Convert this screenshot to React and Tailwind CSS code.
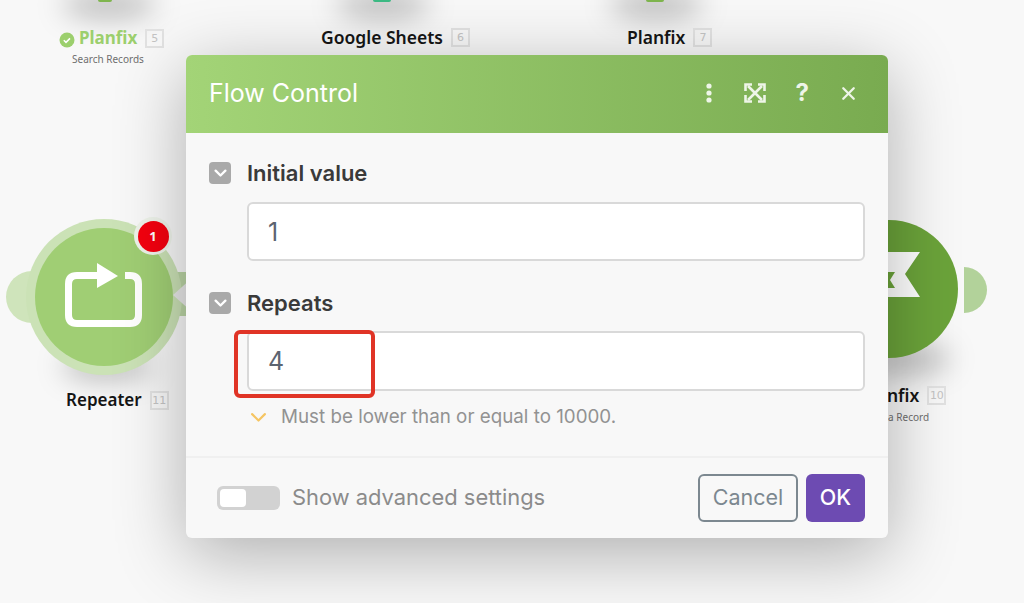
import { X } from "lucide-react";

const sans = "font-['Noto_Sans','Open_Sans',sans-serif]";

function IdBadge({ n }) {
  return (
    <span className="ml-2 flex h-[19px] w-[19px] items-center justify-center border-2 border-[#e2e2e2] font-['DejaVu_Sans',sans-serif] text-[11px] leading-none text-[#c4c4c4]">
      {n}
    </span>
  );
}

function Blob({ className }) {
  // soft shadow under a node
  return <div className={`absolute rounded-[50%] bg-[#000]/25 blur-[14px] ${className}`} />;
}

function Chevron({ color = "white", width = 2, className = "" }) {
  return (
    <svg viewBox="0 0 16 10" className={className} fill="none" stroke={color} strokeWidth={width} strokeLinecap="round" strokeLinejoin="round">
      <path d="M2 2l6 6 6-6" />
    </svg>
  );
}

function Field({ label, value, inputClass }) {
  return (
    <>
      <div className="flex items-center gap-4">
        <span className="flex h-[22px] w-[22px] items-center justify-center rounded bg-[#a9a9a9]">
          <Chevron width={2.8} className="w-[13px]" />
        </span>
        <span className="text-[22px] font-semibold leading-[26px] text-[#3a3a3a]">{label}</span>
      </div>
      <div className={`ml-[38px] flex items-center rounded-md border-2 border-[#d9d9d9] bg-white px-[19px] pt-[2px] text-[25px] text-[#5c6470] ${inputClass}`}>
        {value}
      </div>
    </>
  );
}

function ExpandIcon() {
  return (
    <svg viewBox="0 0 22 20" className="h-[20px] w-[22px]" fill="none" stroke="#eef5e8" strokeWidth="2.6">
      <path d="M4 3l14 14M18 3L4 17" />
      <path d="M1.5 8V1.5H8M14 1.5h6.5V8M20.5 12v6.5H14M8 18.5H1.5V12" />
    </svg>
  );
}

export default function App() {
  return (
    <div className={`relative h-[603px] w-[1024px] overflow-hidden bg-[#f8f8f8] ${sans}`}>
      {/* top row nodes, cut off by the viewport */}
      <Blob className="left-[62px] top-[-8px] h-[26px] w-[94px]" />
      <Blob className="left-[336px] top-[-8px] h-[26px] w-[94px]" />
      <Blob className="left-[609px] top-[-8px] h-[26px] w-[94px]" />
      <div className="absolute left-[98px] top-0 h-[2px] w-[14px] rounded-b-full bg-[#7fb54e]" />
      <div className="absolute left-[373px] top-0 h-[2px] w-[18px] rounded-b-full bg-[#3dba84]" />
      <div className="absolute left-[646px] top-0 h-[2px] w-[18px] rounded-b-full bg-[#7fb54e]" />

      <div className="absolute left-[59px] top-[26px] flex items-center">
        <svg viewBox="0 0 16 16" className="mr-[4px] h-[16px] w-[16px] translate-y-[2px]">
          <circle cx="8" cy="8" r="7.5" fill="#9ccf6d" />
          <path d="M4.8 8.2l2.2 2.2 4-4" fill="none" stroke="white" strokeWidth="1.5" />
        </svg>
        <span className="text-[17px] font-bold leading-[24px] text-[#9ccf6d]">Planfix</span>
        <IdBadge n="5" />
      </div>
      <div className="absolute left-[72px] top-[52px] text-[10px] leading-[14px] text-[#6f6f6f]">Search Records</div>

      <div className="absolute left-[321px] top-[25px] flex items-center">
        <span className="text-[17.5px] font-semibold leading-[24px] text-[#151515]">Google Sheets</span>
        <IdBadge n="6" />
      </div>
      <div className="absolute left-[627px] top-[25px] flex items-center">
        <span className="text-[17.5px] font-semibold leading-[24px] text-[#151515]">Planfix</span>
        <IdBadge n="7" />
      </div>

      {/* Repeater node */}
      <Blob className="left-[62px] top-[352px] h-[28px] w-[90px]" />
      <svg viewBox="0 0 200 180" className="absolute left-0 top-[208px] h-[180px] w-[200px]">
        <circle cx="32" cy="89" r="26" fill="#cfe4bb" />
        <path d="M165 64 L200 64 V108 L165 108 Z" fill="#bcd6a6" />
        <circle cx="104" cy="89" r="78" fill="#cbe2b6" />
        <circle cx="104" cy="89" r="69" fill="#a0ce74" />
        <path d="M173 87 L192 70 V104 Z" fill="#e9e9e9" />
        <path d="M97 67.5 H77 Q68.5 67.5 68.5 76 V107 Q68.5 115.5 77 115.5 H130 Q138.5 115.5 138.5 107 V76 Q138.5 67.5 130 67.5 H125" fill="none" stroke="white" strokeWidth="7" />
        <path d="M97 55 L118 68 L97 80 Z" fill="white" />
      </svg>
      <div className="absolute left-[134px] top-[217px] flex h-[38px] w-[38px] items-center justify-center rounded-full bg-[#eef3ea]">
        <span className="flex h-[31px] w-[31px] items-center justify-center rounded-full bg-[#f5000f] text-[13px] font-bold leading-none text-white">1</span>
      </div>
      <div className="absolute left-[66px] top-[388px] flex items-center">
        <span className="text-[17px] font-semibold leading-[24px] text-[#151515]">Repeater</span>
        <IdBadge n="11" />
      </div>

      {/* Planfix node behind the modal, right side */}
      <Blob className="left-[860px] top-[345px] h-[28px] w-[90px]" />
      <svg viewBox="0 0 170 150" className="absolute left-[830px] top-[215px] h-[150px] w-[170px]">
        <circle cx="59" cy="74" r="69" fill="#6ba33a" />
        <path d="M134 52 A23 23 0 0 1 134 98 Z" fill="#b2d29a" />
        <path d="M50 37 H90 L75 59 L90 82 H50 Z" fill="white" />
        <path d="M50 57 H65 L60 65 L65 73 H50 Z" fill="#6ba33a" />
      </svg>
      <div className="absolute left-[861px] top-[383px] flex items-center">
        <span className="text-[17.5px] font-semibold leading-[24px] text-[#151515]">Planfix</span>
        <IdBadge n="10" />
      </div>
      <div className="absolute left-[851px] top-[410px] text-[10px] leading-[14px] text-[#6f6f6f]">Update a Record</div>

      {/* modal */}
      <div className="absolute left-[186px] top-[55px] flex h-[483px] w-[702px] flex-col overflow-hidden rounded-md bg-[#f8f8f8] font-['Inter',sans-serif] shadow-[0_16px_70px_rgba(0,0,0,0.3)]">
        <div className="flex h-[78px] shrink-0 items-center bg-gradient-to-r from-[#a3d477] to-[#79ab50] pb-[2px] pl-[23px] pr-[29px]">
          <h1 className="text-[25px] leading-none text-white">Flow Control</h1>
          <div className="ml-auto flex items-center">
            <svg viewBox="0 0 8 20" className="h-[20px] w-[8px]" fill="#eef5e8">
              <circle cx="4" cy="3" r="2.6" />
              <circle cx="4" cy="10" r="2.6" />
              <circle cx="4" cy="17" r="2.6" />
            </svg>
            <span className="ml-[31px]"><ExpandIcon /></span>
            <span className="ml-[30px] text-[24px] font-bold leading-none text-[#eef5e8]">?</span>
            <X className="ml-[29px] h-[21px] w-[21px] text-[#eef5e8]" strokeWidth={2.6} />
          </div>
        </div>

        <div className="relative h-[323px] shrink-0 px-[23px] pt-[27px]">
          <Field label="Initial value" value="1" inputClass="mt-[16px] h-[59px]" />
          <div className="mt-[29px]">
            <Field label="Repeats" value="4" inputClass="mt-[15px] h-[60px]" />
          </div>
          <div className="pointer-events-none absolute left-[48px] top-[197px] h-[68px] w-[141px] rounded-md border-[4px] border-[#e03426]" />
          <div className="ml-[41px] mt-[14px] flex items-center">
            <Chevron color="#f5c563" className="w-[17px]" />
            <span className="ml-[14px] text-[18.8px] leading-[24px] text-[#929292]">Must be lower than or equal to 10000.</span>
          </div>
        </div>

        <div className="flex flex-1 items-center border-t-2 border-[#f0f0f0] pb-[1px] pl-[31px] pr-[23px]">
          <div className="flex h-[24px] w-[63px] items-center rounded-md bg-[#d2d2d2] p-[3px]">
            <div className="h-[18px] w-[26px] rounded bg-white" />
          </div>
          <span className="ml-[12px] text-[21.9px] text-[#8b8b8b]">Show advanced settings</span>
          <button className="ml-auto h-[48px] w-[100px] rounded-md border-2 border-[#7c8890] text-[21.5px] text-[#7c8890]">Cancel</button>
          <button className="ml-[8px] h-[48px] w-[59px] rounded-md bg-[#6d4bb2] text-[21.5px] font-medium text-white">OK</button>
        </div>
      </div>
    </div>
  );
}
